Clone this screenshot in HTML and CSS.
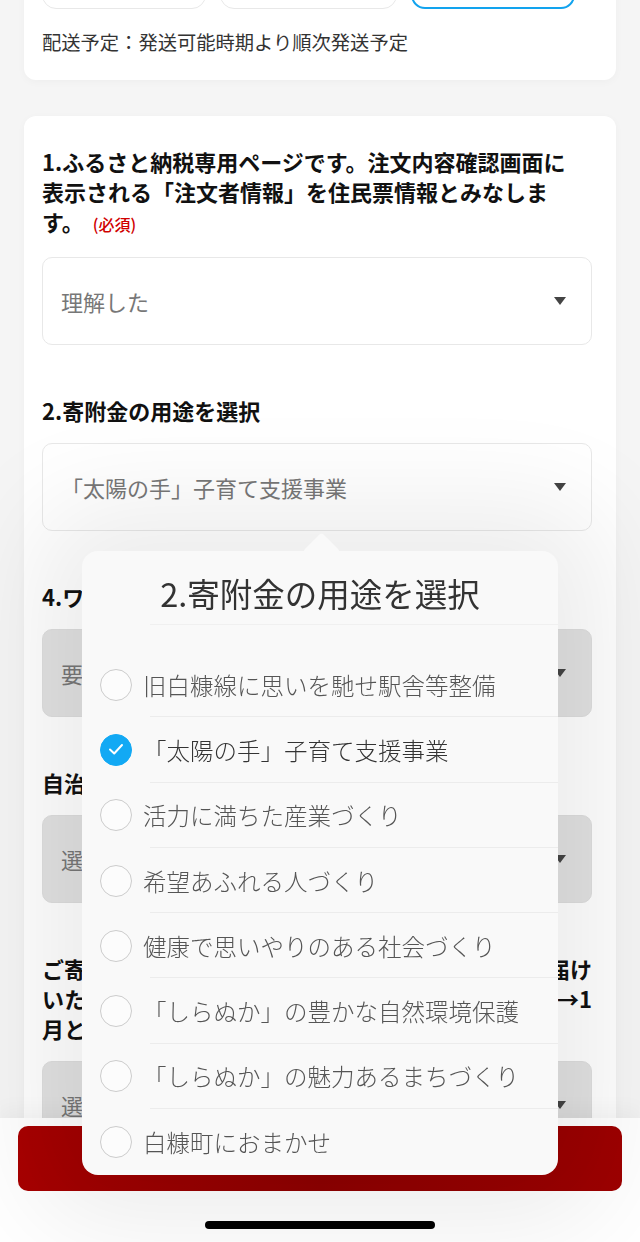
FILE: index.html
```html
<!DOCTYPE html>
<html lang="ja">
<head>
    <meta charset="UTF-8">
    <meta name="viewport" content="width=device-width, initial-scale=1.0">
    <title>ふるさと納税 申し込み</title>
    <link rel="stylesheet" href="styles.css">
</head>
<body>
    <div class="card top-card">
        <div class="variants">
            <div class="variant"></div>
            <div class="variant wide"></div>
            <div class="variant active"></div>
        </div>
        <p class="ship">配送予定：発送可能時期より順次発送予定</p>
    </div>

    <div class="card form-card">
        <div class="field">
            <div class="label">1.ふるさと納税専用ページです。注文内容確認画面に<br>表示される「注文者情報」を住民票情報とみなしま<br>す。<span class="req">(必須)</span></div>
            <div class="select">理解した<span class="caret"></span></div>
        </div>
        <div class="field">
            <div class="label">2.寄附金の用途を選択</div>
            <div class="select">「太陽の手」子育て支援事業<span class="caret"></span></div>
        </div>
        <div class="field">
            <div class="label">4.ワンストップ特例申請書</div>
            <div class="select muted">要望する<span class="caret"></span></div>
        </div>
        <div class="field">
            <div class="label">自治体からのお知らせ</div>
            <div class="select muted">選択してください<span class="caret"></span></div>
        </div>
        <div class="field">
            <div class="label">
                <span class="line fill">ご寄附確定後およそ一ヶ月程度で順次お礼の品をお届け</span>
                <span class="line fill">いたします。年末年始のお申し込みの場合は、12月→1</span>
                <span class="line">月となります。</span>
            </div>
            <div class="select muted">選択してください<span class="caret"></span></div>
        </div>
    </div>

    <div class="footer">
        <button class="submit">寄附を申し込む</button>
        <div class="home-bar"></div>
    </div>

    <div class="sheet">
        <span class="pointer"></span>
        <div class="sheet-title">2.寄附金の用途を選択</div>
        <ul class="options">
            <li class="opt"><span class="radio"></span>旧白糠線に思いを馳せ駅舎等整備</li>
            <li class="opt selected">
                <span class="radio">
                    <svg width="32" height="32" viewBox="0 0 32 32"><polyline points="10,16.5 14.2,20.5 22,12" fill="none" stroke="#fff" stroke-width="2" stroke-linecap="round" stroke-linejoin="round"/></svg>
                </span>「太陽の手」子育て支援事業
            </li>
            <li class="opt"><span class="radio"></span>活力に満ちた産業づくり</li>
            <li class="opt"><span class="radio"></span>希望あふれる人づくり</li>
            <li class="opt"><span class="radio"></span>健康で思いやりのある社会づくり</li>
            <li class="opt"><span class="radio"></span>「しらぬか」の豊かな自然環境保護</li>
            <li class="opt"><span class="radio"></span>「しらぬか」の魅力あるまちづくり</li>
            <li class="opt"><span class="radio"></span>白糠町におまかせ</li>
        </ul>
    </div>
</body>
</html>
```

FILE: styles.css
```css
body {
    margin: 0;
    background: #f5f5f5;
    font-family: "Noto Sans CJK JP", "Noto Sans", sans-serif;
    color: #222;
    height: 1242px;
    overflow: hidden;
}
.card {
    background: #fff;
    border-radius: 12px;
    margin: 0 24px;
    box-shadow: 0 2px 8px rgba(0, 0, 0, 0.03);
}
.top-card {
    margin-top: -60px;
    padding: 18px 18px 24px;
}
.variants {
    display: flex;
    gap: 14px;
}
.variant {
    width: 164px;
    height: 51px;
    box-sizing: border-box;
    border: 1.5px solid #e8e8e8;
    border-radius: 14px;
}
.variant.wide {
    width: 177px;
}
.variant.active {
    border: 2px solid #12a3ee;
}
.ship {
    margin: 19px 0 0;
    font-size: 19.3px;
    line-height: 28px;
    color: #333;
}
.form-card {
    margin-top: 36px;
    padding: 30px 24px 40px 18px;
}
.field + .field {
    margin-top: 50px;
}
.label {
    font-size: 22px;
    line-height: 30px;
    font-weight: bold;
    color: #111;
}
.label .line {
    display: block;
    white-space: nowrap;
}
.label .fill {
    text-align: justify;
    text-align-last: justify;
    white-space: normal;
}
.req {
    color: #d00000;
    font-size: 16px;
    font-weight: 500;
    margin-left: 9px;
}
.select {
    margin-top: 18px;
    height: 88px;
    box-sizing: border-box;
    border: 1px solid #e8e8e8;
    border-radius: 10px;
    padding: 0 18px;
    display: flex;
    align-items: center;
    justify-content: space-between;
    font-size: 22px;
    color: #777;
    background: #fff;
}
.field:first-child .select {
    margin-top: 18px;
}
.select.muted {
    background: #e2e2e2;
    border-color: #dedede;
}
.caret {
    width: 0;
    height: 0;
    border-left: 6px solid transparent;
    border-right: 6px solid transparent;
    border-top: 8px solid #444;
    margin-right: 7px;
}
.footer {
    position: fixed;
    left: 0;
    right: 0;
    bottom: 0;
    height: 124px;
    background: #fff;
    box-shadow: 0 -8px 20px rgba(0, 0, 0, 0.04);
    z-index: 10;
    display: flex;
    flex-direction: column;
    align-items: center;
}
.submit {
    margin-top: 8px;
    width: 604px;
    height: 65px;
    border: none;
    border-radius: 10px;
    background: linear-gradient(90deg, #a80000, #8e0000 50%, #9e0000);
    color: #fff;
    font-family: inherit;
    font-size: 22px;
    font-weight: bold;
}
.home-bar {
    margin-top: 30px;
    width: 230px;
    height: 8px;
    border-radius: 4px;
    background: #000;
}
.sheet {
    position: fixed;
    left: 82px;
    top: 551px;
    width: 476px;
    padding-bottom: 1px;
    background: #f9f9f9;
    border-radius: 16px;
    box-shadow: 0 0 110px 45px rgba(0, 0, 0, 0.08);
    z-index: 20;
}
.pointer {
    position: absolute;
    left: 226px;
    top: -13px;
    width: 27px;
    height: 27px;
    background: #f9f9f9;
    border-radius: 4px;
    transform: rotate(45deg);
}
.sheet-title {
    position: relative;
    padding-top: 20px;
    height: 54px;
    font-size: 32.5px;
    line-height: 44px;
    text-align: center;
    color: #333;
}
.sheet-title::after {
    content: "";
    position: absolute;
    left: 68px;
    right: 0;
    bottom: 0;
    height: 1px;
    background: #f0f0f0;
}
.options {
    list-style: none;
    margin: 27px 0 0;
    padding: 0;
}
.opt {
    position: relative;
    height: 65.3px;
    display: flex;
    align-items: center;
    padding-left: 18px;
    font-size: 23.5px;
    font-weight: 300;
    color: #555;
}
.opt::after {
    content: "";
    position: absolute;
    left: 68px;
    right: 0;
    bottom: 0;
    height: 1px;
    background: #ececec;
}
.opt:last-child::after {
    display: none;
}
.radio {
    flex: none;
    width: 32px;
    height: 32px;
    box-sizing: border-box;
    border: 1.5px solid #cccccc;
    border-radius: 50%;
    margin-right: 11px;
    background: #fcfcfc;
    position: relative;
}
.radio svg {
    position: absolute;
    left: -1.5px;
    top: -1.5px;
}
.opt.selected {
    color: #333;
}
.opt.selected .radio {
    background: #12a9f4;
    border-color: #12a9f4;
}
```
